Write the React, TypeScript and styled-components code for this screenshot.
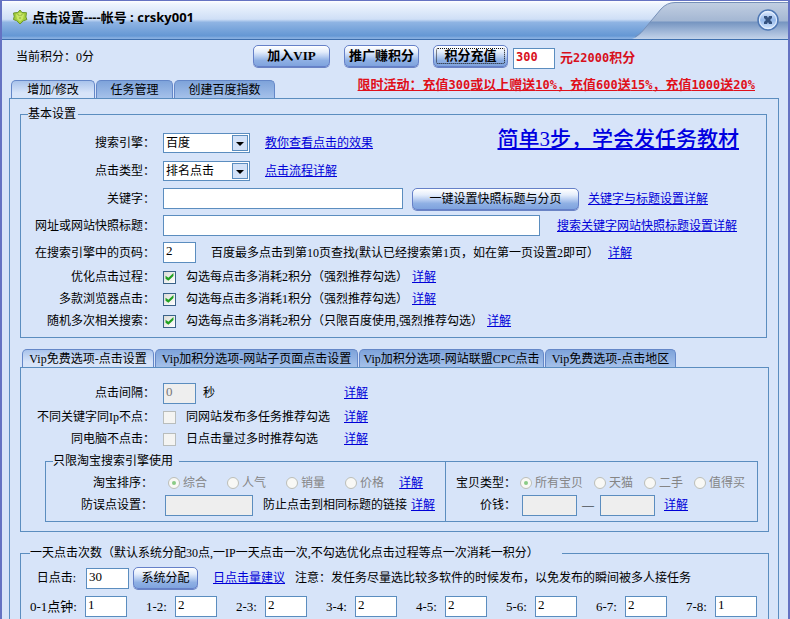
import React from "react";
import styled, { createGlobalStyle, css } from "styled-components";

const LINE = "#5b8dbf";
const BACK = "#d7e4f9";

const GlobalStyle = createGlobalStyle`
  *, *::before, *::after { box-sizing: border-box; }
  html { scrollbar-width: none; }
  body {
    margin: 0;
    background: ${BACK};
    color: #000;
    font: 12px/14px "Liberation Serif", "Noto Sans CJK SC", serif;
  }
  button, input, select { font: inherit; color: inherit; margin: 0; }
`;

const Frame = styled.div`
  min-height: 100vh;
  border: solid #6472c2;
  border-width: 1px 2px 0;
  background: ${BACK};
`;

const TitleBar = styled.header`
  height: 39px;
  display: flex;
  align-items: stretch;
  justify-content: space-between;
  border-bottom: 1px solid #3e6fae;
  background: linear-gradient(#fff 0, #edf4fe 8%, #cfdff6 48%, #8fb4e3 56%, #6497d4 92%, #86aee0 97%);
`;

const Title = styled.h1`
  margin: 0;
  padding: 0 0 6px 10px;
  display: flex;
  align-items: center;
  gap: 4px;
  font: bold 13px/16px "Open Sans", "Noto Sans CJK SC", sans-serif;
  white-space: pre;
`;

const TitleEnd = styled.div`
  display: grid;
  & > * { grid-area: 1 / 1; }
`;

const CloseButton = styled.button`
  align-self: center;
  justify-self: end;
  width: 22px;
  height: 22px;
  margin-right: 9px;
  padding: 0;
  border: 0;
  background: none;
`;

const TopRow = styled.div`
  display: flex;
  align-items: flex-start;
  height: 29px;
  padding: 5px 14px 0;
  white-space: nowrap;
`;

const Score = styled.span`
  width: 237px;
  line-height: 24px;
`;

const TopButtons = styled.div`
  display: flex;
  gap: 14px;
`;

const Recharge = styled.label`
  display: flex;
  align-items: flex-end;
  gap: 5px;
  height: 24px;
  margin-left: 5px;
  color: #d8101c;
  font-size: 13px;
  font-weight: bold;
`;

const Caption = styled.span`
  line-height: 22px;
`;

const Num = styled.span`
  font-family: "DejaVu Sans Mono", monospace;
  font-size: 12px;
`;

const Button = styled.button<{ $width: number; $bold?: boolean; $focused?: boolean }>`
  flex: none;
  width: ${(p) => p.$width}px;
  height: 22px;
  padding: 2px;
  border: 1px solid #6580c8;
  border-radius: 5px;
  background: linear-gradient(#fff 0, #e4edfb 30%, #bdd1f2 50%, #8fb0e4 72%, #7fa3de 100%);
  box-shadow: 0 1px 0 #6a83c4;
  white-space: nowrap;
  line-height: 16px;
  ${(p) => p.$bold && css`font-size: 13px; font-weight: bold;`}
  ${(p) => p.$focused && css`outline: 1px dotted #111; outline-offset: -4px;`}
`;

const Field = styled.input<{ $width: number }>`
  flex: 0 1 ${(p) => p.$width}px;
  width: ${(p) => p.$width}px;
  min-width: 0;
  height: 21px;
  padding: 0 2px 3px;
  border: 1px solid ${LINE};
  border-radius: 0;
  background: #fff;
  font-size: 13px;
  &:disabled { background: #eee; color: #777; }
`;

const AmountField = styled(Field)`
  font-family: "DejaVu Sans Mono", monospace;
  font-size: 12px;
`;

const TabRow = styled.div`
  display: flex;
  align-items: flex-end;
  justify-content: space-between;
  height: 29px;
  padding: 8px 33px 0 9px;
`;

const Promo = styled.a`
  align-self: flex-start;
  color: #e0101a;
  font-size: 13px;
  line-height: 16px;
  font-weight: bold;
  white-space: nowrap;
`;

const Tabs = styled.div<{ $inner?: boolean }>`
  display: flex;
  gap: 1px;
  padding-left: ${(p) => (p.$inner ? 2 : 0)}px;
  margin-top: ${(p) => (p.$inner ? 11 : 0)}px;
`;

const Tab = styled.button<{ $width: number }>`
  flex: 0 0 ${(p) => p.$width}px;
  height: 18px;
  padding: 0;
  border: 1px solid #6487c8;
  border-bottom: 0;
  border-radius: 5px 5px 0 0;
  background: linear-gradient(#7ea3da, #a5c1ea);
  line-height: 16px;
  white-space: nowrap;
  &[aria-selected="true"] { background: linear-gradient(#a9c3eb, ${BACK} 70%); }
`;

const Page = styled.main`
  margin: 0 9px 0 7px;
  padding: 8px 9px 20px 10px;
  min-height: calc(100vh - 98px);
  border: 1px solid ${LINE};
  border-bottom: 0;
`;

const Group = styled.fieldset<{ $kind?: "basic" | "taobao" | "daily" }>`
  min-width: 0;
  margin: 0;
  padding: 8px 0 5px;
  border: 1px solid ${LINE};
  ${(p) => p.$kind === "basic" && css`margin-right: 2px;`}
  ${(p) => p.$kind === "taobao" && css`margin: 4px 10px 9px 24px; padding: 0;`}
  ${(p) => p.$kind === "daily" && css`margin-top: 14px; padding: 7px 11px 30px 9px;`}
`;

const Legend = styled.legend<{ $before?: number; $after?: number }>`
  margin-left: ${(p) => p.$before ?? 7}px;
  padding: 0 ${(p) => p.$after ?? 2}px 0 0;
  line-height: 14px;
  white-space: nowrap;
`;

const SubPanel = styled.section`
  padding-top: 12px;
  border: 1px solid ${LINE};
`;

const Head = styled.div`
  display: flex;
  justify-content: space-between;
  align-items: flex-start;
  padding-right: 27px;
`;

const BigLink = styled.a`
  color: #0000e0;
  font-size: 21px;
  font-weight: 500;
  line-height: 20px;
  white-space: nowrap;
`;

const Row = styled.div<{ $height: number }>`
  display: flex;
  align-items: center;
  height: ${(p) => p.$height}px;
  white-space: nowrap;
`;

const Label = styled.label<{ $width?: number; $gap?: number }>`
  flex: none;
  width: ${(p) => p.$width ?? 134}px;
  margin-right: ${(p) => p.$gap ?? 8}px;
  text-align: right;
`;

const Link = styled.a<{ $gap?: number }>`
  margin-left: ${(p) => p.$gap ?? 9}px;
  color: #0000d8;
  text-underline-offset: 1px;
`;

const Text = styled.span<{ $gap?: number; $width?: number }>`
  margin-left: ${(p) => p.$gap ?? 10}px;
  ${(p) => p.$width && css`width: ${p.$width}px;`}
`;

const SelectBox = styled.span`
  position: relative;
  display: flex;
  width: 87px;
  height: 20px;
  svg { position: absolute; right: 2px; top: 2px; pointer-events: none; }
`;

const Select = styled.select`
  appearance: none;
  width: 100%;
  padding: 0 2px 1px;
  border: 1px solid ${LINE};
  border-radius: 0;
  background: #fff;
`;

const Check = styled.input`
  appearance: none;
  flex: none;
  width: 13px;
  height: 13px;
  display: grid;
  place-items: center;
  border: 1px solid #3a6288;
  background: linear-gradient(135deg, #dcdcd7, #fff);
  &:checked::before {
    content: "";
    width: 9px;
    height: 8px;
    background: #21a121;
    clip-path: polygon(6% 35%, 38% 58%, 94% 0, 94% 38%, 38% 98%, 6% 72%);
  }
  &:disabled { border-color: #b9bdbc; background: #f4f4f2; }
`;

const Columns = styled.div`
  display: flex;
`;

const Column = styled.div<{ $basis: number; $divided?: boolean }>`
  flex: 1 1 ${(p) => p.$basis}px;
  min-width: 0;
  padding: 4px 0 5px;
  ${(p) => p.$divided && css`margin-top: -7px; padding-top: 11px; border-left: 1px solid ${LINE};`}
`;

const Radios = styled.span<{ $gap: number }>`
  display: flex;
  gap: ${(p) => p.$gap}px;
`;

const RadioLabel = styled.label`
  display: flex;
  align-items: center;
  gap: 3px;
  color: #858585;
`;

const Radio = styled.input`
  appearance: none;
  width: 12px;
  height: 12px;
  display: grid;
  place-items: center;
  border: 1px solid #bcbeb8;
  border-radius: 50%;
  background: #f8f8f5;
  &:checked::before {
    content: "";
    width: 4px;
    height: 4px;
    border-radius: 50%;
    background: #8acb86;
  }
`;

const Hours = styled.div`
  display: flex;
  justify-content: space-between;
  margin-top: 7px;
`;

const Hour = styled.label`
  display: flex;
  align-items: center;
  gap: 8px;
  white-space: nowrap;
  font-size: 13px;
`;

const SelectField = ({ id, value }: { id: string; value: string }) => (
  <SelectBox>
    <Select id={id} defaultValue={value}>
      <option>{value}</option>
    </Select>
    <svg width="16" height="16" viewBox="0 0 16 16" aria-hidden="true">
      <rect x=".5" y=".5" width="15" height="15" fill="#d3e2f8" stroke={LINE} />
      <path d="M4 7h8l-4 4z" fill="#000" />
    </svg>
  </SelectBox>
);

const RadioSet = ({ name, items, gap }: { name: string; items: string[]; gap: number }) => (
  <Radios $gap={gap}>
    {items.map((item, i) => (
      <RadioLabel key={item}>
        <Radio type="radio" name={name} defaultChecked={i === 0} disabled />
        {item}
      </RadioLabel>
    ))}
  </Radios>
);

const options = [
  { id: "optimize", label: "优化点击过程：", text: "勾选每点击多消耗2积分（强烈推荐勾选）" },
  { id: "browsers", label: "多款浏览器点击：", text: "勾选每点击多消耗1积分（强烈推荐勾选）" },
  { id: "related", label: "随机多次相关搜索：", text: "勾选每点击多消耗2积分（只限百度使用,强烈推荐勾选）" },
];

const vipTabs: [string, number][] = [
  ["Vip免费选项-点击设置", 132],
  ["Vip加积分选项-网站子页面点击设置", 203],
  ["Vip加积分选项-网站联盟CPC点击", 185],
  ["Vip免费选项-点击地区", 131],
];

const hours: [string, string][] = [
  ["0-1点钟:", "1"], ["1-2:", "2"], ["2-3:", "2"], ["3-4:", "2"],
  ["4-5:", "2"], ["5-6:", "2"], ["6-7:", "2"], ["7-8:", "1"],
];

export default function App() {
  return (
    <>
      <GlobalStyle />
      <Frame>
        <TitleBar>
          <Title>
            <svg width="16" height="16" viewBox="0 0 16 16" aria-hidden="true">
              <path d="M8 1l2 2.500 4.500.2-.6 4.300 1 2.500-3.600 1.300L8 15l-3.200-3.200L1.500 10.500l.7-3L1.500 4l4.300-.5z" fill="#a5cf3c" stroke="#6d962c" />
              <path d="M4 5.500l4-2 4 2-1 4.500-3 2.500L5 10z" fill="#c9e665" />
              <path d="M6 5.500l1 1M10 5.500l-1 1M7.500 9h1" stroke="#4f6c18" />
            </svg>
            点击设置----帐号 : crsky001
          </Title>
          <TitleEnd>
            <svg width="156" height="38" viewBox="0 0 156 38" aria-hidden="true">
              <defs>
                <linearGradient id="wing" x1="0" y1="0" x2="0" y2="1">
                  <stop offset="0" stopColor="#c2cfe2" />
                  <stop offset=".5" stopColor="#a4b7d3" />
                  <stop offset=".54" stopColor="#7695c1" />
                  <stop offset="1" stopColor="#c3d3ea" />
                </linearGradient>
              </defs>
              <path d="M0 38C6 36 9 32 14 26L29 8Q35 1.500 43 1.500H156V38z" fill="url(#wing)" />
              <path d="M3 36C8 33 10 31 14 26L29 8Q35 1.500 43 1.500H156" fill="none" stroke="#7690b8" />
            </svg>
            <CloseButton aria-label="关闭">
              <svg width="22" height="22" viewBox="0 0 22 22" aria-hidden="true">
                <defs>
                  <linearGradient id="orb" x1="0" y1="0" x2="0" y2="1">
                    <stop offset="0" stopColor="#e6f0ff" />
                    <stop offset=".5" stopColor="#94b8ea" />
                    <stop offset="1" stopColor="#dcecff" />
                  </linearGradient>
                </defs>
                <circle cx="11" cy="11" r="10" fill="url(#orb)" stroke="#4f78b4" strokeWidth="1.500" />
                <circle cx="11" cy="11" r="8.500" fill="none" stroke="#e8f2ff" />
                <path d="M7 7h3l1 2 1-2h3v2l-2 2 2 2v2h-3l-1-2-1 2H7v-2l2-2-2-2z" fill="#34527f" />
              </svg>
            </CloseButton>
          </TitleEnd>
        </TitleBar>

        <TopRow>
          <Score>当前积分：0分</Score>
          <TopButtons>
            <Button $width={77} $bold>加入VIP</Button>
            <Button $width={75} $bold>推广赚积分</Button>
            <Button $width={75} $bold $focused>积分充值</Button>
          </TopButtons>
          <Recharge>
            <AmountField $width={42} defaultValue="300" />
            <Caption>元<Num>22000</Num>积分</Caption>
          </Recharge>
        </TopRow>

        <TabRow>
          <Tabs role="tablist">
            <Tab role="tab" aria-selected="true" $width={84}>增加/修改</Tab>
            <Tab role="tab" aria-selected="false" $width={77}>任务管理</Tab>
            <Tab role="tab" aria-selected="false" $width={101}>创建百度指数</Tab>
          </Tabs>
          <Promo href="#promo">
            限时活动：充值<Num>300</Num>或以上赠送<Num>10%</Num>，充值<Num>600</Num>送<Num>15%</Num>，充值<Num>1000</Num>送<Num>20%</Num>
          </Promo>
        </TabRow>

        <Page>
          <Group $kind="basic">
            <Legend>基本设置</Legend>
            <Head>
              <div>
                <Row $height={28}>
                  <Label htmlFor="engine">搜索引擎：</Label>
                  <SelectField id="engine" value="百度" />
                  <Link href="#effect" $gap={15}>教你查看点击的效果</Link>
                </Row>
                <Row $height={28}>
                  <Label htmlFor="kind">点击类型：</Label>
                  <SelectField id="kind" value="排名点击" />
                  <Link href="#flow" $gap={15}>点击流程详解</Link>
                </Row>
              </div>
              <BigLink href="#tutorial">简单3步，学会发任务教材</BigLink>
            </Head>
            <Row $height={27}>
              <Label htmlFor="keyword">关键字：</Label>
              <Field id="keyword" $width={240} />
              <Text $gap={9}><Button $width={167}>一键设置快照标题与分页</Button></Text>
              <Link href="#keyword-help">关键字与标题设置详解</Link>
            </Row>
            <Row $height={27}>
              <Label htmlFor="site">网址或网站快照标题：</Label>
              <Field id="site" $width={377} />
              <Link href="#site-help" $gap={17}>搜索关键字网站快照标题设置详解</Link>
            </Row>
            <Row $height={27}>
              <Label htmlFor="page">在搜索引擎中的页码：</Label>
              <Field id="page" $width={33} defaultValue="2" />
              <Text $gap={15}>百度最多点击到第10页查找(默认已经搜索第1页，如在第一页设置2即可）</Text>
              <Link href="#page-help">详解</Link>
            </Row>
            {options.map((o) => (
              <Row key={o.id} $height={22}>
                <Label htmlFor={o.id}>{o.label}</Label>
                <Check type="checkbox" id={o.id} defaultChecked />
                <Text>{o.text}</Text>
                <Link href={`#${o.id}-help`} $gap={4}>详解</Link>
              </Row>
            ))}
          </Group>

          <Tabs role="tablist" $inner>
            {vipTabs.map(([name, width], i) => (
              <Tab key={name} role="tab" aria-selected={i === 0} $width={width}>{name}</Tab>
            ))}
          </Tabs>
          <SubPanel>
            <Row $height={26}>
              <Label htmlFor="interval">点击间隔：</Label>
              <Field id="interval" $width={33} defaultValue="0" disabled />
              <Text $gap={7} $width={132}>秒</Text>
              <Link href="#interval-help">详解</Link>
            </Row>
            <Row $height={22}>
              <Label htmlFor="sameip">不同关键字同Ip不点：</Label>
              <Check type="checkbox" id="sameip" disabled />
              <Text $width={149}>同网站发布多任务推荐勾选</Text>
              <Link href="#sameip-help">详解</Link>
            </Row>
            <Row $height={22}>
              <Label htmlFor="samepc">同电脑不点击：</Label>
              <Check type="checkbox" id="samepc" disabled />
              <Text $width={149}>日点击量过多时推荐勾选</Text>
              <Link href="#samepc-help">详解</Link>
            </Row>
            <Group $kind="taobao">
              <Legend $after={6}>只限淘宝搜索引擎使用</Legend>
              <Columns>
                <Column $basis={399}>
                  <Row $height={22}>
                    <Label as="span" $width={107} $gap={15}>淘宝排序：</Label>
                    <RadioSet name="sort" gap={20} items={["综合", "人气", "销量", "价格"]} />
                    <Link href="#sort-help" $gap={15}>详解</Link>
                  </Row>
                  <Row $height={22}>
                    <Label htmlFor="guard" $width={107} $gap={12}>防误点设置：</Label>
                    <Field id="guard" $width={88} disabled />
                    <Text>防止点击到相同标题的链接</Text>
                    <Link href="#guard-help" $gap={4}>详解</Link>
                  </Row>
                </Column>
                <Column $basis={312} $divided>
                  <Row $height={22}>
                    <Label as="span" $width={70} $gap={4}>宝贝类型：</Label>
                    <RadioSet name="goods" gap={11} items={["所有宝贝", "天猫", "二手", "值得买"]} />
                  </Row>
                  <Row $height={22}>
                    <Label htmlFor="low" $width={70} $gap={6}>价钱：</Label>
                    <Field id="low" $width={55} disabled />
                    <Text $gap={5} $width={18}>—</Text>
                    <Field aria-label="最高价钱" $width={55} disabled />
                    <Link href="#price-help">详解</Link>
                  </Row>
                </Column>
              </Columns>
            </Group>
          </SubPanel>

          <Group $kind="daily">
            <Legend $before={0} $after={23}>一天点击次数（默认系统分配30点,一IP一天点击一次,不勾选优化点击过程等点一次消耗一积分）</Legend>
            <Row $height={22}>
              <Label htmlFor="daily" $width={46} $gap={10}>日点击:</Label>
              <Field id="daily" $width={43} defaultValue="30" />
              <Text $gap={4}><Button $width={65}>系统分配</Button></Text>
              <Link href="#daily-help" $gap={15}>日点击量建议</Link>
              <Text>注意：发任务尽量选比较多软件的时候发布，以免发布的瞬间被多人接任务</Text>
            </Row>
            <Hours>
              {hours.map(([name, value]) => (
                <Hour key={name}>
                  {name}
                  <Field $width={42} defaultValue={value} />
                </Hour>
              ))}
            </Hours>
          </Group>
        </Page>
      </Frame>
    </>
  );
}
